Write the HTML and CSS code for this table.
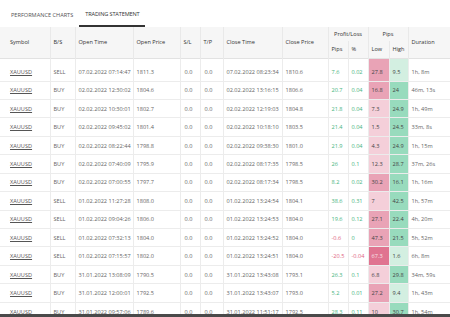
FILE: index.html
```html
<!DOCTYPE html>
<html lang="en">
  <head>
    <meta charset="UTF-8" />
    <meta name="viewport" content="width=device-width, initial-scale=1.0" />
    <title>Trading Statement</title>
    <link rel="stylesheet" href="styles.css">
  </head>
  <body>
    <div class="tabs">
      <span class="tab">PERFORMANCE CHARTS</span>
      <span class="tab active">TRADING STATEMENT</span>
    </div>

    <table class="statement">
      <colgroup>
        <col style="width: 50px" />
        <col style="width: 25px" />
        <col style="width: 58px" />
        <col style="width: 47px" />
        <col style="width: 20px" />
        <col style="width: 23px" />
        <col style="width: 59px" />
        <col style="width: 46px" />
        <col style="width: 20px" />
        <col style="width: 20px" />
        <col style="width: 21px" />
        <col style="width: 19px" />
        <col style="width: 42px" />
      </colgroup>
      <thead>
        <tr class="head-top">
          <th rowspan="2" class="first">Symbol</th>
          <th rowspan="2">B/S</th>
          <th rowspan="2">Open Time</th>
          <th rowspan="2">Open Price</th>
          <th rowspan="2">S/L</th>
          <th rowspan="2">T/P</th>
          <th rowspan="2">Close Time</th>
          <th rowspan="2">Close Price</th>
          <th colspan="2" class="group">Profit/Loss</th>
          <th colspan="2" class="group">Pips</th>
          <th rowspan="2">Duration</th>
        </tr>
        <tr class="head-sub">
          <th>Pips</th>
          <th>%</th>
          <th>Low</th>
          <th>High</th>
        </tr>
      </thead>
      <tbody>
        <tr class="first-row">
          <td class="first"><a href="#">XAUUSD</a></td><td>SELL</td><td>07.02.2022 07:14:47</td><td>1811.3</td><td class="sl">0.0</td><td class="sl">0.0</td>
          <td>07.02.2022 08:23:34</td><td>1810.6</td><td class="up">7.6</td><td class="up">0.02</td><td class="low-2">27.8</td><td class="high-1">9.5</td><td>1h, 8m</td>
        </tr>
        <tr>
          <td class="first"><a href="#">XAUUSD</a></td><td>BUY</td><td>02.02.2022 12:30:02</td><td>1804.6</td><td class="sl">0.0</td><td class="sl">0.0</td>
          <td>02.02.2022 13:16:15</td><td>1806.6</td><td class="up">20.7</td><td class="up">0.04</td><td class="low-2">16.8</td><td class="high-2">24</td><td>46m, 13s</td>
        </tr>
        <tr>
          <td class="first"><a href="#">XAUUSD</a></td><td>BUY</td><td>02.02.2022 10:30:01</td><td>1802.7</td><td class="sl">0.0</td><td class="sl">0.0</td>
          <td>02.02.2022 12:19:03</td><td>1804.8</td><td class="up">21.8</td><td class="up">0.04</td><td class="low-1">7.3</td><td class="high-2">24.9</td><td>1h, 49m</td>
        </tr>
        <tr>
          <td class="first"><a href="#">XAUUSD</a></td><td>BUY</td><td>02.02.2022 09:45:02</td><td>1801.4</td><td class="sl">0.0</td><td class="sl">0.0</td>
          <td>02.02.2022 10:18:10</td><td>1803.5</td><td class="up">21.4</td><td class="up">0.04</td><td class="low-1">1.5</td><td class="high-2">24.5</td><td>33m, 8s</td>
        </tr>
        <tr>
          <td class="first"><a href="#">XAUUSD</a></td><td>BUY</td><td>02.02.2022 08:22:44</td><td>1798.8</td><td class="sl">0.0</td><td class="sl">0.0</td>
          <td>02.02.2022 09:38:30</td><td>1801.0</td><td class="up">21.9</td><td class="up">0.04</td><td class="low-1">4.3</td><td class="high-2">24.9</td><td>1h, 15m</td>
        </tr>
        <tr>
          <td class="first"><a href="#">XAUUSD</a></td><td>BUY</td><td>02.02.2022 07:40:09</td><td>1795.9</td><td class="sl">0.0</td><td class="sl">0.0</td>
          <td>02.02.2022 08:17:35</td><td>1798.5</td><td class="up">26</td><td class="up">0.1</td><td class="low-1">12.3</td><td class="high-2">28.7</td><td>37m, 26s</td>
        </tr>
        <tr>
          <td class="first"><a href="#">XAUUSD</a></td><td>BUY</td><td>02.02.2022 07:00:55</td><td>1797.7</td><td class="sl">0.0</td><td class="sl">0.0</td>
          <td>02.02.2022 08:17:34</td><td>1798.5</td><td class="up">8.2</td><td class="up">0.02</td><td class="low-2">30.2</td><td class="high-2">16.1</td><td>1h, 16m</td>
        </tr>
        <tr>
          <td class="first"><a href="#">XAUUSD</a></td><td>SELL</td><td>01.02.2022 11:27:28</td><td>1808.0</td><td class="sl">0.0</td><td class="sl">0.0</td>
          <td>01.02.2022 13:24:54</td><td>1804.1</td><td class="up">38.6</td><td class="up">0.31</td><td class="low-1">7</td><td class="high-2">42.5</td><td>1h, 57m</td>
        </tr>
        <tr>
          <td class="first"><a href="#">XAUUSD</a></td><td>SELL</td><td>01.02.2022 09:04:26</td><td>1806.0</td><td class="sl">0.0</td><td class="sl">0.0</td>
          <td>01.02.2022 13:24:53</td><td>1804.0</td><td class="up">19.6</td><td class="up">0.12</td><td class="low-2">27.1</td><td class="high-2">22.4</td><td>4h, 20m</td>
        </tr>
        <tr>
          <td class="first"><a href="#">XAUUSD</a></td><td>SELL</td><td>01.02.2022 07:32:13</td><td>1804.0</td><td class="sl">0.0</td><td class="sl">0.0</td>
          <td>01.02.2022 13:24:52</td><td>1804.0</td><td class="down">-0.6</td><td class="up">0</td><td class="low-2">47.3</td><td class="high-2">21.5</td><td>5h, 52m</td>
        </tr>
        <tr>
          <td class="first"><a href="#">XAUUSD</a></td><td>SELL</td><td>01.02.2022 07:15:57</td><td>1802.0</td><td class="sl">0.0</td><td class="sl">0.0</td>
          <td>01.02.2022 13:24:51</td><td>1804.0</td><td class="down">-20.5</td><td class="down">-0.04</td><td class="low-3">67.3</td><td class="high-1">1.6</td><td>6h, 8m</td>
        </tr>
        <tr>
          <td class="first"><a href="#">XAUUSD</a></td><td>BUY</td><td>31.01.2022 13:08:09</td><td>1790.5</td><td class="sl">0.0</td><td class="sl">0.0</td>
          <td>31.01.2022 13:43:08</td><td>1793.1</td><td class="up">26.3</td><td class="up">0.1</td><td class="low-1">6.8</td><td class="high-2">29.8</td><td>34m, 59s</td>
        </tr>
        <tr>
          <td class="first"><a href="#">XAUUSD</a></td><td>BUY</td><td>31.01.2022 12:00:01</td><td>1792.5</td><td class="sl">0.0</td><td class="sl">0.0</td>
          <td>31.01.2022 13:43:07</td><td>1793.0</td><td class="up">5.2</td><td class="up">0.01</td><td class="low-2">27.2</td><td class="high-1">9.4</td><td>1h, 43m</td>
        </tr>
        <tr>
          <td class="first"><a href="#">XAUUSD</a></td><td>BUY</td><td>31.01.2022 09:57:06</td><td>1789.6</td><td class="sl">0.0</td><td class="sl">0.0</td>
          <td>31.01.2022 11:51:17</td><td>1792.5</td><td class="up">28.3</td><td class="up">0.11</td><td class="low-1">10</td><td class="high-2">30.7</td><td>1h, 54m</td>
        </tr>
      </tbody>
    </table>

    <div class="window-edge"></div>
  </body>
</html>
```

FILE: styles.css
```css
body {
  font-family: "Open Sans", "Noto Sans", sans-serif;
  margin: 0;
  padding: 0;
  background-color: #ffffff;
  color: #666666;
  overflow: hidden;
  height: 317px;
}

.tabs {
  display: flex;
  height: 27px;
  padding-left: 11px;
  font-size: 5.6px;
  color: #555555;
}

.tab {
  display: flex;
  align-items: center;
  padding-top: 3px;
  margin-right: 6px;
}

.tab.active {
  color: #333333;
  padding: 3px 6px 0 6px;
  border-bottom: 2px solid #333333;
  box-sizing: border-box;
  letter-spacing: -0.15px;
}

.statement {
  width: 450px;
  table-layout: fixed;
  border-collapse: collapse;
  font-size: 5.6px;
}

.statement th {
  background-color: #f6f6f6;
  color: #333333;
  font-weight: 400;
  text-align: left;
  padding: 0 0 0 3px;
  border-left: 1px solid #e9e9e9;
  white-space: nowrap;
}

.statement th.first,
.statement td.first {
  border-left: none;
  padding-left: 10px;
}

.statement th.group {
  text-align: center;
  padding: 0;
}

.head-top {
  height: 14px;
}

.head-sub {
  height: 17px;
}

.statement thead {
  border-bottom: 1px solid #e2e2e2;
}

.statement td {
  height: 18.45px;
  padding: 0 0 0 3px;
  border-left: 1px solid #ececec;
  border-top: 1px solid #ececec;
  white-space: nowrap;
  box-sizing: border-box;
}

.first-row td {
  height: 23px;
  padding-top: 4px;
  border-top: none;
}

.statement td.sl {
  padding-left: 4px;
}

.statement a {
  color: #555555;
  text-decoration: underline;
}

.up {
  color: #46b47d;
}

.down {
  color: #e0627f;
}

.low-1 {
  background-color: #f4cfd9;
  color: #444444;
}

.low-2 {
  background-color: #e9a3b6;
  color: #444444;
}

.low-3 {
  background-color: #e07390;
  color: #f7e4ea;
}

.high-1 {
  background-color: #d3efe1;
  color: #444444;
}

.high-2 {
  background-color: #98dbbd;
  color: #444444;
}

.window-edge {
  position: fixed;
  left: 0;
  right: 0;
  bottom: 0;
  height: 3px;
  background-color: #4a4a4a;
}
```
